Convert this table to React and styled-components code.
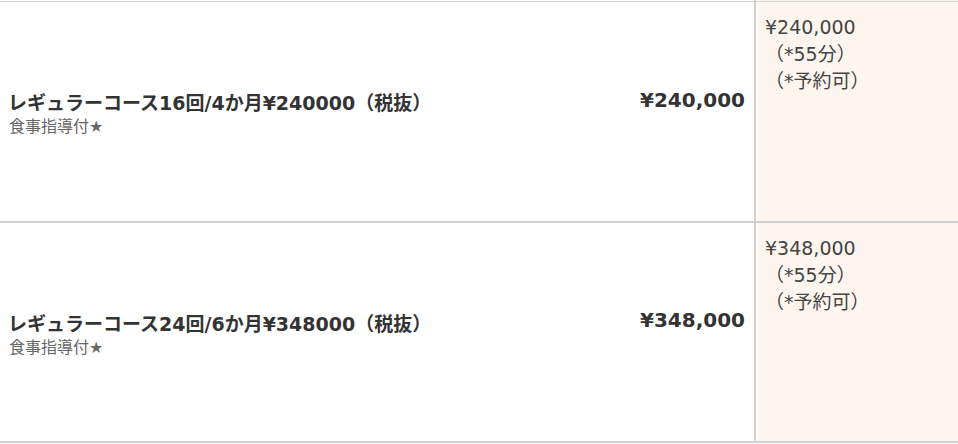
import styled, { createGlobalStyle } from "styled-components"

const GlobalStyle = createGlobalStyle`
  html, body {
    margin: 0;
    padding: 0;
    background: #fff;
  }
  body {
    font-family: "DejaVu Sans", "Noto Sans CJK JP", sans-serif;
    color: #333;
  }
`

const courses = [
  {
    title: "レギュラーコース16回/4か月¥240000（税抜）",
    note: "食事指導付★",
    price: "¥240,000",
    detail: ["¥240,000", "（*55分）", "（*予約可）"],
    height: 219,
  },
  {
    title: "レギュラーコース24回/6か月¥348000（税抜）",
    note: "食事指導付★",
    price: "¥348,000",
    detail: ["¥348,000", "（*55分）", "（*予約可）"],
    height: 218,
  },
]

const Table = styled.div`
  width: 958px;
  overflow: hidden;
`

const Row = styled.div`
  display: grid;
  grid-template-columns: minmax(0, 1fr) 130px 202px;
  border-bottom: 2px solid #d0d0d0;
`

const TopEdge = styled(Row)`
  height: 1px;
  border-bottom: 1px solid #d0d0d0;
`

const Cell = styled.div`
  box-sizing: border-box;
  height: ${(props) => props.$h}px;
`

const NameCell = styled(Cell)`
  display: flex;
  flex-direction: column;
  justify-content: center;
  padding: 5px 0 0 8px;
`

const Title = styled.div`
  font-size: 19px;
  font-weight: bold;
  line-height: 26px;
  color: #333;
  white-space: nowrap;
`

const Note = styled.div`
  font-size: 16px;
  line-height: 22px;
  color: #666;
  padding-left: 1px;
`

const PriceCell = styled(Cell)`
  display: flex;
  align-items: center;
  justify-content: flex-end;
  padding: 0 9px 24px 0;
  border-right: 2px solid #d0d0d0;
  font-size: 20px;
  font-weight: bold;
  color: #333;
`

const DetailCell = styled(Cell)`
  background: #fdf5ee;
  margin-left: 1px;
  padding: 12px 0 0 8px;
  font-size: 19px;
  line-height: 27px;
  color: #444;
`

const Line = styled.div`
  white-space: nowrap;
`

function App() {
  return (
    <>
      <GlobalStyle />
      <Table>
        <TopEdge>
          <Cell $h={1} />
          <PriceCell $h={1} />
          <DetailCell $h={1} style={{ padding: 0 }} />
        </TopEdge>
        {courses.map((c) => (
          <Row key={c.title}>
            <NameCell $h={c.height}>
              <Title>{c.title}</Title>
              <Note>{c.note}</Note>
            </NameCell>
            <PriceCell $h={c.height}>{c.price}</PriceCell>
            <DetailCell $h={c.height}>
              {c.detail.map((d) => (
                <Line key={d}>{d}</Line>
              ))}
            </DetailCell>
          </Row>
        ))}
      </Table>
    </>
  )
}

export default App
